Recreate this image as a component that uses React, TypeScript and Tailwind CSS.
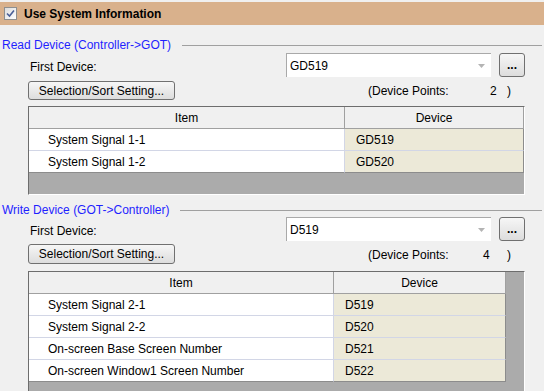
import React from "react";

type Row = { item: string; dev: string };

function Btn({ children, w, h }: { children: React.ReactNode; w: string; h: string }) {
  return (
    <div
      className={`${w} ${h} flex items-center justify-center rounded-[3px] border border-[#707070] bg-gradient-to-b from-[#f6f6f6] to-[#dddddd] text-[12px] text-black`}
    >
      {children}
    </div>
  );
}

function Combo({ value }: { value: string }) {
  return (
    <div className="relative flex h-[24px] w-[205px] items-center border-l border-t border-[#a9a9a9] bg-white pl-[3px] text-[12px] text-black">
      {value}
      <svg className="absolute right-[6px] top-[10px]" width="7" height="4" viewBox="0 0 7 4">
        <path d="M0 0 H7 L3.5 4 Z" fill="#b4b4b4" />
      </svg>
    </div>
  );
}

function SectionLabel({ text, gap }: { text: string; gap: string }) {
  return (
    <div className="flex h-[14px] items-center pl-[2px]">
      <span className="whitespace-nowrap text-[12px] leading-none text-[#1f1fff]">{text}</span>
      <div className={`${gap} mr-[2px] h-px flex-1 bg-[#a0a0a0]`} />
    </div>
  );
}

function Table({
  rows,
  itemW,
  devW,
  grayH,
}: {
  rows: Row[];
  itemW: string;
  devW: string;
  grayH: string;
}) {
  return (
    <div className="ml-[28px] w-[497px] border border-b-white border-l-[#6d6d6d] border-r-white border-t-[#6d6d6d] bg-[#ababab]">
      <div className="flex h-[22px]">
        <div className={`${itemW} flex items-center justify-center border-b border-r border-[#a0a0a0] bg-[#f0f0f0] text-[12px] text-black`}>
          Item
        </div>
        <div className={`${devW} flex items-center justify-center border-b border-r border-[#a0a0a0] bg-[#f0f0f0] text-[12px] text-black`}>
          Device
        </div>
      </div>
      {rows.map((r, i) => {
        const last = i === rows.length - 1;
        const bc = last ? "border-b-[#8c8c8c]" : "border-b-[#d2d6e6]";
        return (
          <div key={i} className="flex h-[22px]">
            <div className={`${itemW} flex items-center border-b border-r border-r-[#d2d6e6] ${bc} bg-white pl-[19px] text-[12px] text-black`}>
              {r.item}
            </div>
            <div className={`${devW} flex items-center border-b border-r border-r-[#8c8c8c] ${bc} bg-[#ece9d8] pl-[11px] text-[12px] text-black`}>
              {r.dev}
            </div>
          </div>
        );
      })}
      <div className={grayH} />
    </div>
  );
}

export default function App() {
  return (
    <div className="h-[391px] w-[544px] overflow-hidden bg-[#f0f0f0] pt-[2px] font-['Tahoma','Liberation_Sans',Arial,sans-serif]">
      {/* header */}
      <div className="flex h-[23px] items-center bg-[#d9b18c] pl-[4px]">
        <div className="flex h-[13px] w-[13px] items-center justify-center border border-[#8e8f8f] bg-gradient-to-br from-[#dcdcdc] to-white">
          <svg width="9" height="9" viewBox="0 0 9 9">
            <path d="M1 4.5 L3.5 7 L8 1.5" fill="none" stroke="#4a5f97" strokeWidth="1.6" />
          </svg>
        </div>
        <span className="ml-[7px] text-[12px] font-bold text-black">Use System Information</span>
      </div>

      {/* Read device */}
      <div className="mt-[13px]">
        <SectionLabel text="Read Device (Controller->GOT)" gap="ml-[11px]" />
      </div>
      <div className="mt-[1px] flex h-[24px] items-center pl-[30px]">
        <span className="w-[256px] pt-[3px] text-[12px] text-black">First Device:</span>
        <Combo value="GD519" />
        <div className="ml-[8px]">
          <Btn w="w-[26px]" h="h-[24px]">
            <span className="font-bold leading-none">...</span>
          </Btn>
        </div>
      </div>
      <div className="mt-[4px] flex h-[19px] pl-[28px]">
        <Btn w="w-[147px]" h="h-[19px]">Selection/Sort Setting...</Btn>
        <div className="ml-[193px] flex items-end text-[12px] text-black">
          <span className="w-[122px]">(Device Points:</span>
          <span className="w-[17px]">2</span>
          <span>)</span>
        </div>
      </div>
      <div className="mt-[6px]">
        <Table
          rows={[
            { item: "System Signal 1-1", dev: "GD519" },
            { item: "System Signal 1-2", dev: "GD520" },
          ]}
          itemW="w-[316px]"
          devW="w-[179px]"
          grayH="h-[21px]"
        />
      </div>

      {/* Write device */}
      <div className="mt-[8px]">
        <SectionLabel text="Write Device (GOT->Controller)" gap="ml-[11px]" />
      </div>
      <div className="flex h-[24px] items-center pl-[30px]">
        <span className="w-[256px] pt-[3px] text-[12px] text-black">First Device:</span>
        <Combo value="D519" />
        <div className="ml-[8px]">
          <Btn w="w-[26px]" h="h-[24px]">
            <span className="font-bold leading-none">...</span>
          </Btn>
        </div>
      </div>
      <div className="mt-[3px] flex h-[20px] pl-[28px]">
        <Btn w="w-[147px]" h="h-[20px]">Selection/Sort Setting...</Btn>
        <div className="ml-[193px] flex items-end text-[12px] text-black">
          <span className="w-[115px]">(Device Points:</span>
          <span className="w-[24px]">4</span>
          <span>)</span>
        </div>
      </div>
      <div className="mt-[7px]">
        <Table
          rows={[
            { item: "System Signal 2-1", dev: "D519" },
            { item: "System Signal 2-2", dev: "D520" },
            { item: "On-screen Base Screen Number", dev: "D521" },
            { item: "On-screen Window1 Screen Number", dev: "D522" },
          ]}
          itemW="w-[305px]"
          devW="w-[172px]"
          grayH="h-[30px]"
        />
      </div>
    </div>
  );
}
